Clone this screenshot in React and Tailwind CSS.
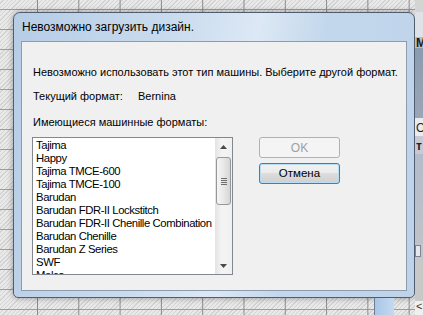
import React from "react";

const formats = [
  "Tajima",
  "Happy",
  "Tajima TMCE-600",
  "Tajima TMCE-100",
  "Barudan",
  "Barudan FDR-II Lockstitch",
  "Barudan FDR-II Chenille Combination",
  "Barudan Chenille",
  "Barudan Z Series",
  "SWF",
  "Melco",
];

// small arrow glyph for the scrollbar buttons
const Arrow = ({ down }) => (
  <svg width="7" height="4" viewBox="0 0 7 4">
    {down ? (
      <path d="M0 0h7L3.5 4z" fill="#4a4a4a" />
    ) : (
      <path d="M0 4h7L3.5 0z" fill="#4a4a4a" />
    )}
  </svg>
);

const ScrollBar = () => {
  return (
    <div className="flex flex-col w-[17px] h-full bg-[linear-gradient(to_right,#e3e3e3,#f4f4f4_40%,#f0f0f0)]">
      <div className="h-[17px] flex items-center justify-center">
        <Arrow />
      </div>
      <div className="flex-1 pt-[2px]">
        <div className="mx-[1px] h-[48px] rounded-[3px] border border-[#979797] bg-[linear-gradient(to_right,#f5f5f5,#e8e8e8_50%,#d6d6d6)] flex flex-col items-center justify-center gap-[1px]">
          <div className="w-[6px] h-[1px] bg-[#6e6e6e]" />
          <div className="w-[6px] h-[1px] bg-[#6e6e6e]" />
          <div className="w-[6px] h-[1px] bg-[#6e6e6e]" />
          <div className="w-[6px] h-[1px] bg-[#6e6e6e]" />
        </div>
      </div>
      <div className="h-[17px] flex items-center justify-center">
        <Arrow down />
      </div>
    </div>
  );
};

const FormatList = () => {
  return (
    <div className="flex w-[201px] h-[138px] border border-[#828790] bg-white">
      <div className="flex-1 overflow-hidden pl-[3px] pt-[1px]">
        {formats.map((f) => (
          <div key={f} className="h-[13px] leading-[13px] text-[11.3px] tracking-[-0.4px] text-black whitespace-nowrap">
            {f}
          </div>
        ))}
      </div>
      <ScrollBar />
    </div>
  );
};

const Dialog = () => {
  return (
    <div className="w-[402px] h-[286px] rounded-t-[7px] rounded-b-[5px] border border-[#4f5d6e] bg-[linear-gradient(100deg,#b6cde6_0%,#c9dbee_35%,#dce8f5_55%,#c3d7ec_70%,#bed3ea_100%)] px-[7px] pb-[6px] flex flex-col shadow-[0_0_6px_rgba(0,0,0,0.35)]">
      {/* title bar */}
      <div className="h-[28px] flex items-center pl-[1px] text-[12px] text-black">
        Невозможно загрузить дизайн.
      </div>
      {/* client area */}
      <div className="flex-1 border border-[#8c9cac] bg-[#f0f0f0] pl-[11px] pt-[22px] text-[11px] text-black">
        <div className="leading-[16px] whitespace-nowrap">
          Невозможно использовать этот тип машины. Выберите другой формат.
        </div>
        <div className="mt-[8px] leading-[16px] flex">
          <span className="w-[105px]">Текущий формат:</span>
          <span>Bernina</span>
        </div>
        <div className="mt-[10px] leading-[16px]">Имеющиеся машинные форматы:</div>
        <div className="mt-[7px] flex items-start gap-[26px] -ml-[1px]">
          <FormatList />
          <div className="flex flex-col gap-[5px]">
            <button className="w-[81px] h-[21px] rounded-[3px] border border-[#adb2b5] bg-[#f4f4f4] text-[12px] text-[#a0a0a0] leading-none">
              OK
            </button>
            <button className="w-[81px] h-[21px] rounded-[3px] border border-[#3c7fb1] bg-[linear-gradient(to_bottom,#f2f2f2,#ebebeb_45%,#dddddd_50%,#cfcfcf)] shadow-[inset_0_0_0_1px_#b9ddf5] text-[11.5px] text-black leading-none">
              Отмена
            </button>
          </div>
        </div>
      </div>
    </div>
  );
};

const SidePanel = () => {
  return (
    <div className="w-[8px] h-full flex flex-col text-[12px] leading-none overflow-hidden">
      <div className="h-[12px] bg-[#d4d4d4]" />
      <div className="h-[25px] bg-[#dfe3e8]" />
      <div className="h-[11px] bg-[#b7bec8] text-[#1a1a1a] font-bold whitespace-nowrap pl-[1px]">Ме</div>
      <div className="h-[70px] bg-[linear-gradient(to_bottom,#8b9bb0,#9aa6b6)]" />
      <div className="h-[2px] bg-[#e8ecf0]" />
      <div className="h-[16px] bg-[#ececec] text-[#222] pl-[1px] pt-[2px] whitespace-nowrap">О</div>
      <div className="h-[18px] bg-[#c9c9d6] text-[#222] font-bold pl-[1px] pt-[4px] whitespace-nowrap">т</div>
      <div className="h-[90px] bg-[linear-gradient(to_bottom,#b3bccb,#c0c3c8)]" />
      <div className="h-[14px] bg-[#c2c5c9] flex items-center">
        <div className="w-[6px] h-[12px] border border-[#7d8590] bg-[#e4e8ee]" />
      </div>
      <div className="flex-1 bg-[#c8c8c8]" />
      <div className="h-[14px] bg-[#f0f0f0] text-[#333] pl-[1px] text-[11px]">&lt;</div>
    </div>
  );
};

export default function App() {
  return (
    <div className="w-[423px] h-[315px] overflow-hidden flex font-['Liberation_Sans',Arial,sans-serif]">
      <div className="w-[415px] h-full flex flex-col pt-[12px] pl-[13px] [background-image:linear-gradient(to_right,#8a8a8a_1px,transparent_1px),linear-gradient(to_bottom,#9d9d9d_1px,transparent_1px),repeating-linear-gradient(135deg,#e9e9e9_0px,#e9e9e9_2px,#d3d3d3_2px,#d3d3d3_3px)] [background-size:41.3px_100%,100%_20px,auto] [background-position:37px_0,0_9px,0_0]">
        <Dialog />
        <div className="flex-1 flex">
          <div className="ml-[361px] w-[20px] h-full bg-[linear-gradient(to_right,#6f7f93_1px,#a9c6e6_1px,#c4daf0)]" />
        </div>
      </div>
      <SidePanel />
    </div>
  );
}
